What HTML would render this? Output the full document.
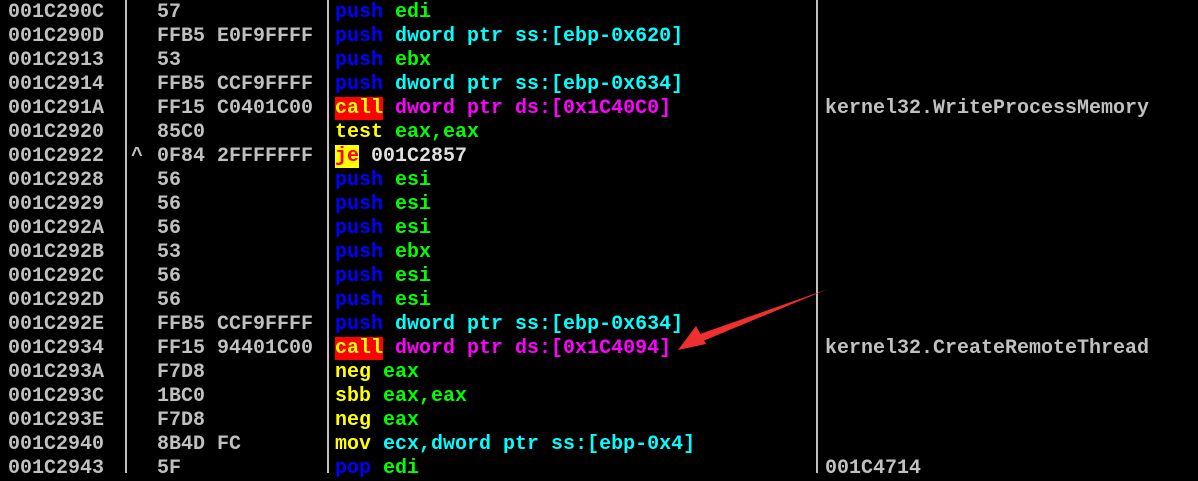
<!DOCTYPE html><html><head><style>
body{margin:0;background:#000;width:1198px;height:473px;overflow:hidden;position:relative;font-family:"Liberation Mono",monospace;font-weight:bold;font-size:20px;color:#c0c0c0}
.r{position:absolute;left:0;height:24px;line-height:24px;white-space:pre;width:1198px}
.r span{position:absolute}
.a{left:8px}.b{left:157px}.c{left:335px}.m{left:825px}.u{left:131px}
.bl{color:#0000ff}.g{color:#00ff00}.cy{color:#00ffff}.y{color:#ffff00}.mg{color:#ff00ff}.w{color:#e0e0e0}
.call{background:#ff0000;color:#ffff00}.je{background:#ffff00;color:#ff0000}
.v{position:absolute;top:0;height:473px;width:2px;background:#c0c0c0}
</style></head><body>
<div class="v" style="left:125px"></div><div class="v" style="left:327px"></div><div class="v" style="left:816px"></div>
<div class="r" style="top:1px"><span class="a">001C290C</span><span class="b">57</span><span class="c"><b class="bl">push</b> <b class="g">edi</b></span></div>
<div class="r" style="top:25px"><span class="a">001C290D</span><span class="b">FFB5 E0F9FFFF</span><span class="c"><b class="bl">push</b> <b class="cy">dword ptr ss:[ebp-0x620]</b></span></div>
<div class="r" style="top:49px"><span class="a">001C2913</span><span class="b">53</span><span class="c"><b class="bl">push</b> <b class="g">ebx</b></span></div>
<div class="r" style="top:73px"><span class="a">001C2914</span><span class="b">FFB5 CCF9FFFF</span><span class="c"><b class="bl">push</b> <b class="cy">dword ptr ss:[ebp-0x634]</b></span></div>
<div class="r" style="top:97px"><span class="a">001C291A</span><span class="b">FF15 C0401C00</span><span class="c"><b class="call">call</b> <b class="mg">dword ptr ds:[0x1C40C0]</b></span><span class="m">kernel32.WriteProcessMemory</span></div>
<div class="r" style="top:121px"><span class="a">001C2920</span><span class="b">85C0</span><span class="c"><b class="y">test</b> <b class="g">eax,eax</b></span></div>
<div class="r" style="top:145px"><span class="a">001C2922</span><span class="u">^</span><span class="b">0F84 2FFFFFFF</span><span class="c"><b class="je">je</b> <b class="w">001C2857</b></span></div>
<div class="r" style="top:169px"><span class="a">001C2928</span><span class="b">56</span><span class="c"><b class="bl">push</b> <b class="g">esi</b></span></div>
<div class="r" style="top:193px"><span class="a">001C2929</span><span class="b">56</span><span class="c"><b class="bl">push</b> <b class="g">esi</b></span></div>
<div class="r" style="top:217px"><span class="a">001C292A</span><span class="b">56</span><span class="c"><b class="bl">push</b> <b class="g">esi</b></span></div>
<div class="r" style="top:241px"><span class="a">001C292B</span><span class="b">53</span><span class="c"><b class="bl">push</b> <b class="g">ebx</b></span></div>
<div class="r" style="top:265px"><span class="a">001C292C</span><span class="b">56</span><span class="c"><b class="bl">push</b> <b class="g">esi</b></span></div>
<div class="r" style="top:289px"><span class="a">001C292D</span><span class="b">56</span><span class="c"><b class="bl">push</b> <b class="g">esi</b></span></div>
<div class="r" style="top:313px"><span class="a">001C292E</span><span class="b">FFB5 CCF9FFFF</span><span class="c"><b class="bl">push</b> <b class="cy">dword ptr ss:[ebp-0x634]</b></span></div>
<div class="r" style="top:337px"><span class="a">001C2934</span><span class="b">FF15 94401C00</span><span class="c"><b class="call">call</b> <b class="mg">dword ptr ds:[0x1C4094]</b></span><span class="m">kernel32.CreateRemoteThread</span></div>
<div class="r" style="top:361px"><span class="a">001C293A</span><span class="b">F7D8</span><span class="c"><b class="y">neg</b> <b class="g">eax</b></span></div>
<div class="r" style="top:385px"><span class="a">001C293C</span><span class="b">1BC0</span><span class="c"><b class="y">sbb</b> <b class="g">eax,eax</b></span></div>
<div class="r" style="top:409px"><span class="a">001C293E</span><span class="b">F7D8</span><span class="c"><b class="y">neg</b> <b class="g">eax</b></span></div>
<div class="r" style="top:433px"><span class="a">001C2940</span><span class="b">8B4D FC</span><span class="c"><b class="y">mov</b> <b class="cy">ecx,dword ptr ss:[ebp-0x4]</b></span></div>
<div class="r" style="top:457px"><span class="a">001C2943</span><span class="b">5F</span><span class="c"><b class="bl">pop</b> <b class="g">edi</b></span><span class="m">001C4714</span></div>
<svg style="position:absolute;left:0;top:0" width="1198" height="473"><polygon points="828,289 700,334 703,341" fill="#f03030"/><polygon points="678,350 696,326 706,344" fill="#f03030"/></svg>
</body></html>
